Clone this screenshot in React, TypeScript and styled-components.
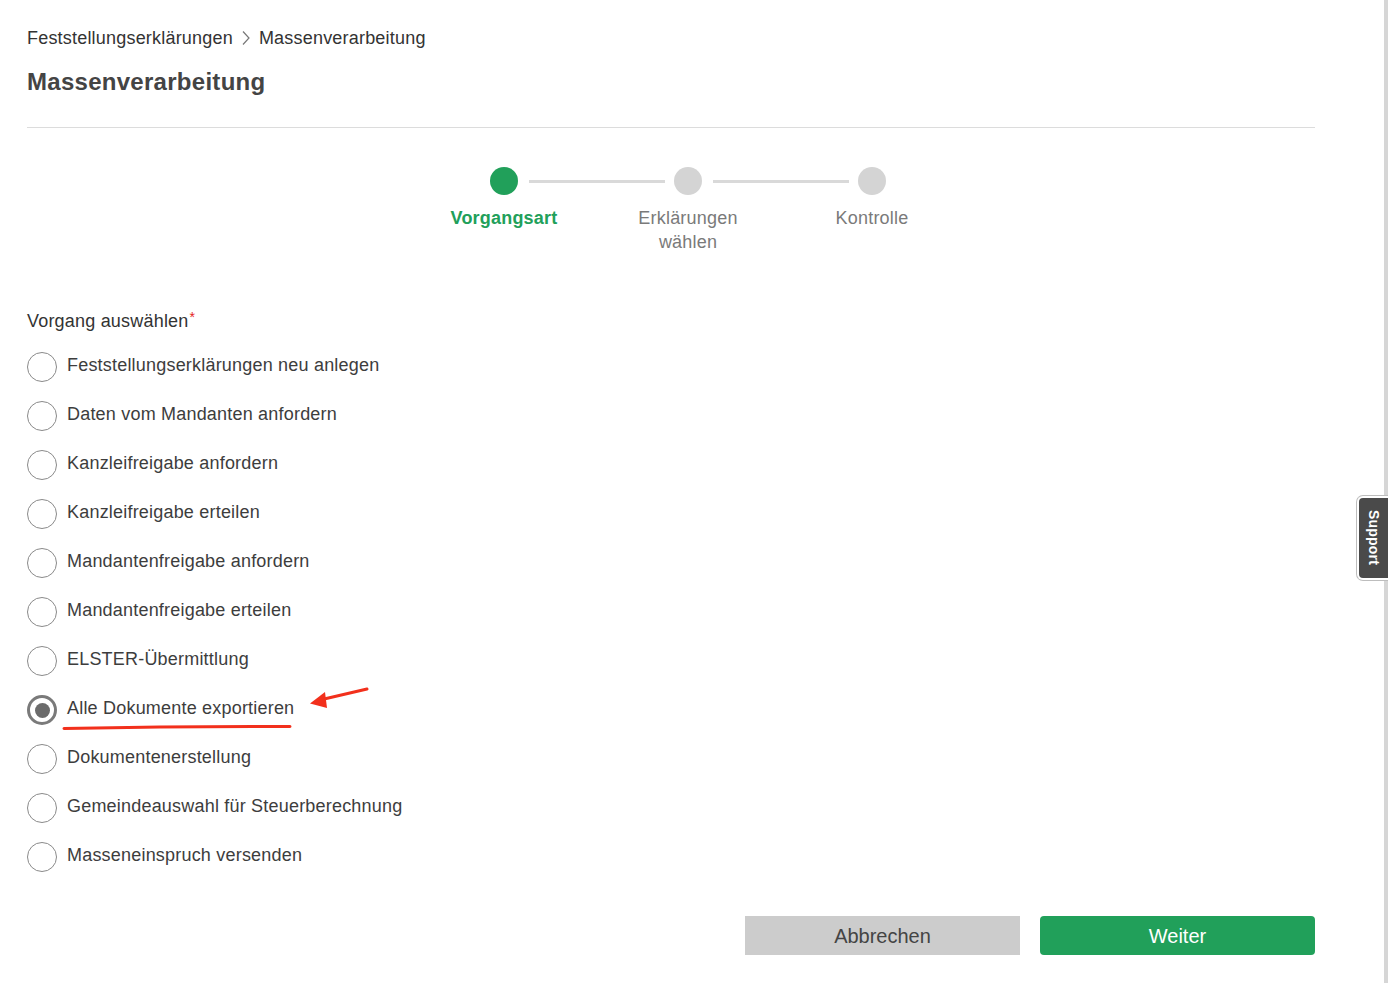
import React from "react";
import styled, { createGlobalStyle } from "styled-components";

const GlobalStyle = createGlobalStyle`
  html, body { margin: 0; padding: 0; background: #fff; }
  body { font-family: "Liberation Sans", Arial, Helvetica, sans-serif; color: #333; }
  * { box-sizing: border-box; }
`;

const Shell = styled.div`
  display: flex;
  min-height: 983px;
  width: 1388px;
  position: relative;
`;

const Main = styled.main`
  flex: 1;
  padding: 27px 69px 0 27px;
`;

const ScrollStrip = styled.div`
  width: 4px;
  background: #d6d6d6;
`;

const Breadcrumb = styled.nav`
  display: flex;
  align-items: center;
  gap: 8px;
  font-size: 18px;
  line-height: 22px;
  letter-spacing: 0.2px;
  color: #333;
`;

const Crumb = styled.span`
  color: #333;
`;

const Title = styled.h1`
  margin: 18px 0 0;
  font-size: 24px;
  line-height: 30px;
  font-weight: bold;
  letter-spacing: 0.28px;
  color: #444;
`;

const Divider = styled.hr`
  margin: 30px 0 0;
  border: none;
  height: 1px;
  background: #dcdcdc;
`;

const Stepper = styled.div`
  margin: 39px 0 0 385px;
  width: 552px;
`;

const DotRow = styled.div`
  display: flex;
  align-items: center;
  padding-left: 78px;
`;

const Dot = styled.span<{ $active?: boolean }>`
  width: 28px;
  height: 28px;
  border-radius: 50%;
  background: ${(p) => (p.$active ? "#21a05a" : "#d4d4d4")};
  flex: none;
`;

const Connector = styled.span`
  width: 136px;
  height: 3px;
  background: #d9d9d9;
  margin: 0 9px 0 11px;
`;

const LabelRow = styled.div`
  display: grid;
  grid-template-columns: repeat(3, 184px);
  margin-top: 11px;
`;

const StepLabel = styled.div<{ $active?: boolean }>`
  text-align: center;
  font-size: 18px;
  line-height: 24px;
  letter-spacing: 0.2px;
  color: ${(p) => (p.$active ? "#21a05a" : "#7a7a7a")};
  font-weight: ${(p) => (p.$active ? "bold" : "normal")};
`;

const GroupLabel = styled.div`
  margin-top: 56px;
  font-size: 18px;
  line-height: 22px;
  letter-spacing: 0.2px;
  color: #333;
`;

const Required = styled.span`
  color: #e5231b;
  font-size: 14px;
  vertical-align: top;
  line-height: 14px;
  margin-left: 1px;
`;

const OptionList = styled.div`
  margin-top: 20px;
  display: flex;
  flex-direction: column;
  gap: 19px;
  position: relative;
`;

const Option = styled.label`
  display: flex;
  align-items: flex-start;
  gap: 10px;
  height: 30px;
  cursor: pointer;
`;

const RadioCircle = styled.span<{ $checked?: boolean }>`
  width: 30px;
  height: 30px;
  border-radius: 50%;
  border: ${(p) => (p.$checked ? "3px solid #7a7a7a" : "1.5px solid #8a8a8a")};
  display: flex;
  align-items: center;
  justify-content: center;
  flex: none;
  background: #fff;
`;

const RadioDot = styled.span`
  width: 15px;
  height: 15px;
  border-radius: 50%;
  background: #6b6b6b;
`;

const OptionText = styled.span`
  font-size: 18px;
  line-height: 24px;
  padding-top: 1px;
  letter-spacing: 0.2px;
  color: #3d3d3d;
`;

const Annotation = styled.svg`
  position: absolute;
  left: -27px;
  top: -352px;
  width: 420px;
  height: 800px;
  pointer-events: none;
  overflow: visible;
`;

const Actions = styled.div`
  display: flex;
  justify-content: flex-end;
  gap: 20px;
  margin-top: 44px;
`;

const Button = styled.button<{ $primary?: boolean }>`
  width: 275px;
  height: 39px;
  border: none;
  border-radius: ${(p) => (p.$primary ? "4px" : "0")};
  background: ${(p) => (p.$primary ? "#21a05a" : "#cccccc")};
  color: ${(p) => (p.$primary ? "#fff" : "#444")};
  font-family: "Liberation Sans", Arial, sans-serif;
  font-size: 20px;
  padding: 1px 0 0;
  cursor: pointer;
`;

const SupportTab = styled.div`
  position: absolute;
  right: 0;
  top: 496px;
  width: 31px;
  height: 84px;
  background: #4a4a4a;
  border: 2px solid #fff;
  border-right: none;
  border-radius: 6px 0 0 6px;
  box-shadow: 0 0 0 1px #bdbdbd;
  display: flex;
  align-items: center;
  justify-content: center;
`;

const SupportText = styled.span`
  writing-mode: vertical-rl;
  color: #fff;
  font-weight: bold;
  font-size: 14px;
  letter-spacing: 0.2px;
`;

const options = [
  "Feststellungserklärungen neu anlegen",
  "Daten vom Mandanten anfordern",
  "Kanzleifreigabe anfordern",
  "Kanzleifreigabe erteilen",
  "Mandantenfreigabe anfordern",
  "Mandantenfreigabe erteilen",
  "ELSTER-Übermittlung",
  "Alle Dokumente exportieren",
  "Dokumentenerstellung",
  "Gemeindeauswahl für Steuerberechnung",
  "Masseneinspruch versenden",
];

export default function App() {
  const selected = "Alle Dokumente exportieren";
  return (
    <>
      <GlobalStyle />
      <Shell>
        <Main>
          <Breadcrumb>
            <Crumb>Feststellungserklärungen</Crumb>
            <svg width="10" height="16" viewBox="0 0 10 16">
              <path d="M2 1.5 L8 8 L2 14.5" fill="none" stroke="#777" strokeWidth="1.2" />
            </svg>
            <Crumb>Massenverarbeitung</Crumb>
          </Breadcrumb>
          <Title>Massenverarbeitung</Title>
          <Divider />
          <Stepper>
            <DotRow>
              <Dot $active />
              <Connector />
              <Dot />
              <Connector />
              <Dot />
            </DotRow>
            <LabelRow>
              <StepLabel $active>Vorgangsart</StepLabel>
              <StepLabel>
                Erklärungen
                <br />
                wählen
              </StepLabel>
              <StepLabel>Kontrolle</StepLabel>
            </LabelRow>
          </Stepper>
          <GroupLabel>
            Vorgang auswählen<Required>*</Required>
          </GroupLabel>
          <OptionList>
            {options.map((o) => (
              <Option key={o}>
                <RadioCircle $checked={o === selected}>
                  {o === selected && <RadioDot />}
                </RadioCircle>
                <OptionText>{o}</OptionText>
              </Option>
            ))}
            <Annotation viewBox="0 0 420 800">
              <path
                d="M64 728.5 Q180 726 290 726.5"
                fill="none"
                stroke="#f2301c"
                strokeWidth="3"
                strokeLinecap="round"
              />
              <path
                d="M367 689 L322 699.5"
                fill="none"
                stroke="#f2301c"
                strokeWidth="3"
                strokeLinecap="round"
              />
              <path d="M310 703.5 L325 692 L327 708 Z" fill="#f2301c" />
            </Annotation>
          </OptionList>
          <Actions>
            <Button>Abbrechen</Button>
            <Button $primary>Weiter</Button>
          </Actions>
        </Main>
        <ScrollStrip />
        <SupportTab>
          <SupportText>Support</SupportText>
        </SupportTab>
      </Shell>
    </>
  );
}
